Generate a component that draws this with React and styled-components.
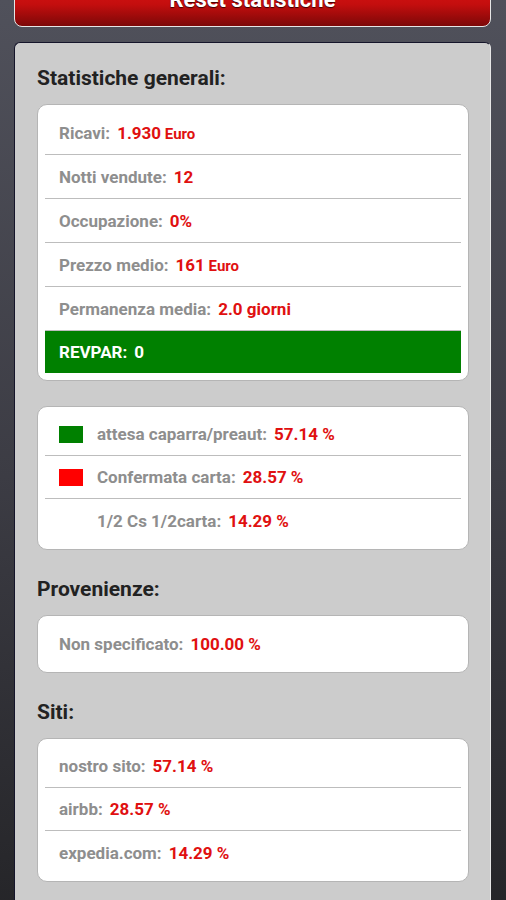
import React from 'react';
import styled, { createGlobalStyle } from 'styled-components';

const GlobalStyle = createGlobalStyle`
	html, body {
		margin: 0;
		padding: 0;
	}
	body {
		min-height: 900px;
		background: linear-gradient(to bottom, #50515b 0%, #3c3c44 50%, #232326 100%);
		font-family: Roboto, "Liberation Sans", sans-serif;
		overflow: hidden;
	}
`;

const Page = styled.div`
	padding: 0 15px 40px 14px;
`;

const ResetButton = styled.button`
	display: block;
	width: 100%;
	height: 50px;
	margin-top: -23px;
	padding: 0 0 6px;
	box-sizing: border-box;
	border: 1px solid #e6e6e6;
	border-radius: 8px;
	background: linear-gradient(to bottom, #e01414 0%, #c40e0e 55%, #7c0808 100%);
	color: #fff;
	font-family: Roboto, "Liberation Sans", sans-serif;
	font-size: 22px;
	font-weight: 700;
	line-height: 44px;
	text-shadow: 0 1px 1px #3a0000;
`;

const Panel = styled.section`
	margin-top: 15px;
	background: #cccccc;
	border: 1px solid #15152a;
	border-right-color: #e6e6e6;
	border-radius: 6px;
	padding: 23px 21px 30px 22px;
`;

const Heading = styled.h3`
	margin: ${({ $first }) => ($first ? '0' : '27px')} 0 14px;
	font-size: 21px;
	line-height: 24px;
	font-weight: 700;
	color: #222;
`;

const Card = styled.div`
	background: #fff;
	border: 1px solid #b5b5b5;
	border-radius: 10px;
	padding: 6px 7px 7px;
	margin-top: ${({ $gap }) => $gap || 0}px;
`;

const Row = styled.div`
	display: flex;
	align-items: center;
	box-sizing: border-box;
	height: ${({ $tall }) => ($tall ? '44px' : '43px')};
	padding: 0 14px;
	border-bottom: 1px solid #bdbdbd;
	font-size: 17px;
	font-weight: 700;
	color: #8e8e8e;

	&:last-child {
		border-bottom: none;
	}
`;

const HighlightRow = styled(Row)`
	background: #008000;
	color: #fff;
	height: 42px;
`;

const Value = styled.span`
	margin-left: 7px;
	font-weight: 700;
	font-size: 17px;
	color: ${({ $light }) => ($light ? '#fff' : '#e01010')};
`;

const Unit = styled.span`
	font-size: 15px;
`;

const Swatch = styled.span`
	flex: none;
	width: 24px;
	height: 17px;
	margin-right: 14px;
	background: ${({ $color }) => $color || 'transparent'};
`;

const general = [
	{ label: 'Ricavi:', value: '1.930', unit: 'Euro' },
	{ label: 'Notti vendute:', value: '12' },
	{ label: 'Occupazione:', value: '0%' },
	{ label: 'Prezzo medio:', value: '161', unit: 'Euro' },
	{ label: 'Permanenza media:', value: '2.0 giorni' },
];

const states = [
	{ color: '#008000', label: 'attesa caparra/preaut:', value: '57.14 %' },
	{ color: '#ff0000', label: 'Confermata carta:', value: '28.57 %' },
	{ color: null, label: '1/2 Cs 1/2carta:', value: '14.29 %' },
];

const sites = [
	{ label: 'nostro sito:', value: '57.14 %' },
	{ label: 'airbb:', value: '28.57 %' },
	{ label: 'expedia.com:', value: '14.29 %' },
];

const App = () => {
	return (
		<Page>
			<GlobalStyle />
			<ResetButton>Reset statistiche</ResetButton>
			<Panel>
				<Heading $first>Statistiche generali:</Heading>
				<Card>
					{general.map((item) => (
						<Row $tall key={item.label}>
							{item.label}
							<Value>
								{item.value}
								{item.unit && <Unit> {item.unit}</Unit>}
							</Value>
						</Row>
					))}
					<HighlightRow>
						REVPAR:<Value $light>0</Value>
					</HighlightRow>
				</Card>

				<Card $gap={25}>
					{states.map((item) => (
						<Row key={item.label}>
							<Swatch $color={item.color} />
							{item.label}
							<Value>{item.value}</Value>
						</Row>
					))}
				</Card>

				<Heading>Provenienze:</Heading>
				<Card>
					<Row>
						Non specificato:<Value>100.00 %</Value>
					</Row>
				</Card>

				<Heading>Siti:</Heading>
				<Card>
					{sites.map((item) => (
						<Row key={item.label}>
							{item.label}
							<Value>{item.value}</Value>
						</Row>
					))}
				</Card>
			</Panel>
		</Page>
	);
};

export default App;
